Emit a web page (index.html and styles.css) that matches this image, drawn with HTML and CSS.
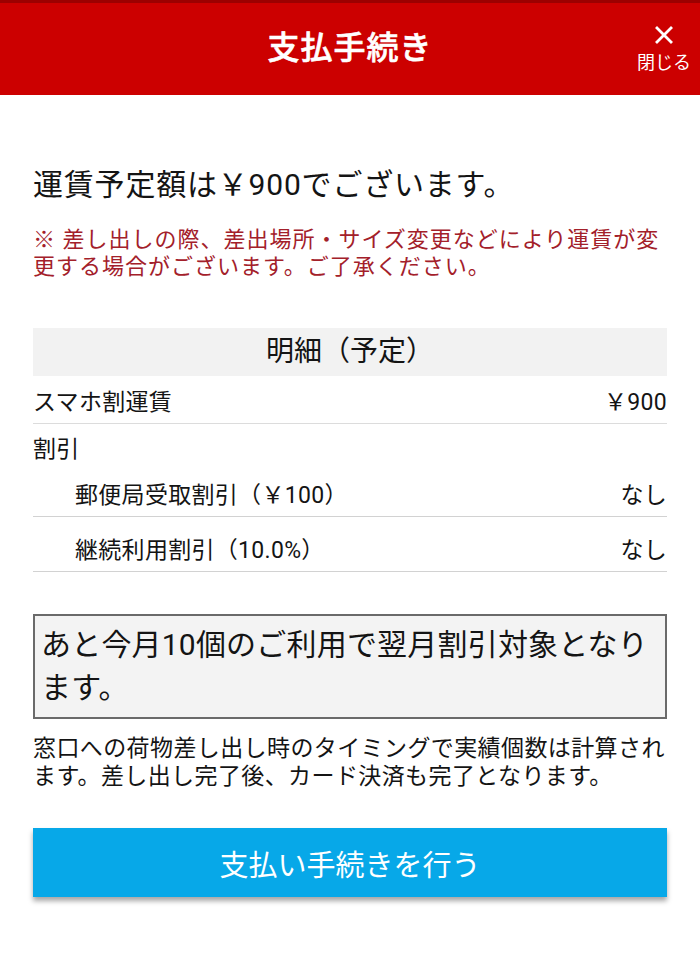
FILE: index.html
```html
<!DOCTYPE html>
<html lang="ja">
<head>
<meta charset="utf-8">
<title>支払手続き</title>
<link rel="stylesheet" href="styles.css">
</head>
<body>
<header class="appbar">
  <div class="appbar-side"></div>
  <h1 class="appbar-title">支払手続き</h1>
  <div class="appbar-side appbar-right">
    <button class="close-btn" type="button">
      <svg class="close-icon" width="18" height="18" viewBox="0 0 18 18" aria-hidden="true">
        <path d="M2 2 L16 16 M16 2 L2 16" stroke="#fff" stroke-width="2.8" stroke-linecap="square" fill="none"/>
      </svg>
      <span class="close-label">閉じる</span>
    </button>
  </div>
</header>

<main class="content">
  <p class="fare">運賃予定額は￥900でございます。</p>
  <p class="note">※ 差し出しの際、差出場所・サイズ変更などにより運賃が変更する場合がございます。ご了承ください。</p>

  <section class="detail">
    <div class="detail-head">明細（予定）</div>
    <div class="row row-main">
      <span>スマホ割運賃</span><span>￥900</span>
    </div>
    <div class="row row-group">
      <span>割引</span>
    </div>
    <div class="row row-sub">
      <span>郵便局受取割引（￥100）</span><span>なし</span>
    </div>
    <div class="row row-sub row-last">
      <span>継続利用割引（10.0%）</span><span>なし</span>
    </div>
  </section>

  <div class="notice-box">あと今月10個のご利用で翌月割引対象となります。</div>

  <p class="info">窓口への荷物差し出し時のタイミングで実績個数は計算されます。差し出し完了後、カード決済も完了となります。</p>

  <div class="pay-wrap">
    <button class="pay-btn" type="button">支払い手続きを行う</button>
  </div>
</main>
</body>
</html>
```

FILE: styles.css
```css
* {
  box-sizing: border-box;
}

html, body {
  margin: 0;
  padding: 0;
  background: #ffffff;
}

body {
  width: 700px;
  font-family: Roboto, "Noto Sans CJK JP", sans-serif;
  color: #141414;
}

.appbar {
  display: grid;
  grid-template-columns: 1fr auto 1fr;
  align-items: center;
  height: 95px;
  background: #cc0000;
  border-top: 3px solid #9c0000;
}

.appbar-title {
  margin: 0;
  font-size: 32px;
  font-weight: 500;
  color: #ffffff;
  letter-spacing: 1px;
  line-height: 1;
  padding-bottom: 3px;
  -webkit-text-stroke: 0.6px #ffffff;
}

.appbar-right {
  display: flex;
  justify-content: flex-end;
}

.close-btn {
  display: flex;
  flex-direction: column;
  align-items: center;
  gap: 9px;
  margin: 0 9px 0 0;
  padding: 0;
  border: 0;
  background: transparent;
  color: #ffffff;
  font-family: Roboto, "Noto Sans CJK JP", sans-serif;
  cursor: pointer;
}

.close-icon {
  display: block;
}

.close-label {
  font-size: 18px;
  line-height: 20px;
}

.content {
  padding: 0 33px;
}

.fare {
  margin: 69px 0 0;
  font-size: 30px;
  line-height: 42px;
  letter-spacing: 0.8px;
}

.note {
  margin: 20px 0 0;
  font-size: 22px;
  line-height: 27px;
  letter-spacing: 1px;
  color: #a3202a;
}

.detail {
  margin-top: 48px;
}

.detail-head {
  height: 48px;
  line-height: 48px;
  text-align: center;
  font-size: 28px;
  background: #f2f2f2;
}

.row {
  display: flex;
  justify-content: space-between;
  align-items: center;
  font-size: 23px;
  letter-spacing: 0.3px;
}

.row-main {
  height: 48px;
  border-bottom: 1px solid #dcdcdc;
}

.row-group {
  height: 45px;
}

.row-sub {
  height: 48px;
  padding-left: 42px;
  border-bottom: 1px solid #d2d2d2;
}

.row-last {
  height: 55px;
  padding-top: 7px;
}

.notice-box {
  margin-top: 42px;
  padding: 7px 6px 8px;
  border: 2px solid #6a6a6a;
  background: #f3f3f3;
  font-size: 30px;
  line-height: 43px;
  letter-spacing: 0.2px;
}

.info {
  margin: 16px 0 0;
  font-size: 23px;
  line-height: 28px;
  letter-spacing: 0.4px;
}

.pay-wrap {
  margin-top: 37px;
  padding-bottom: 12px;
}

.pay-btn {
  display: block;
  width: 100%;
  height: 69px;
  border: 0;
  background: #07a8e8;
  color: #ffffff;
  font-family: Roboto, "Noto Sans CJK JP", sans-serif;
  font-size: 29px;
  box-shadow: 0 4px 5px rgba(0, 0, 0, 0.35);
  cursor: pointer;
}
```
